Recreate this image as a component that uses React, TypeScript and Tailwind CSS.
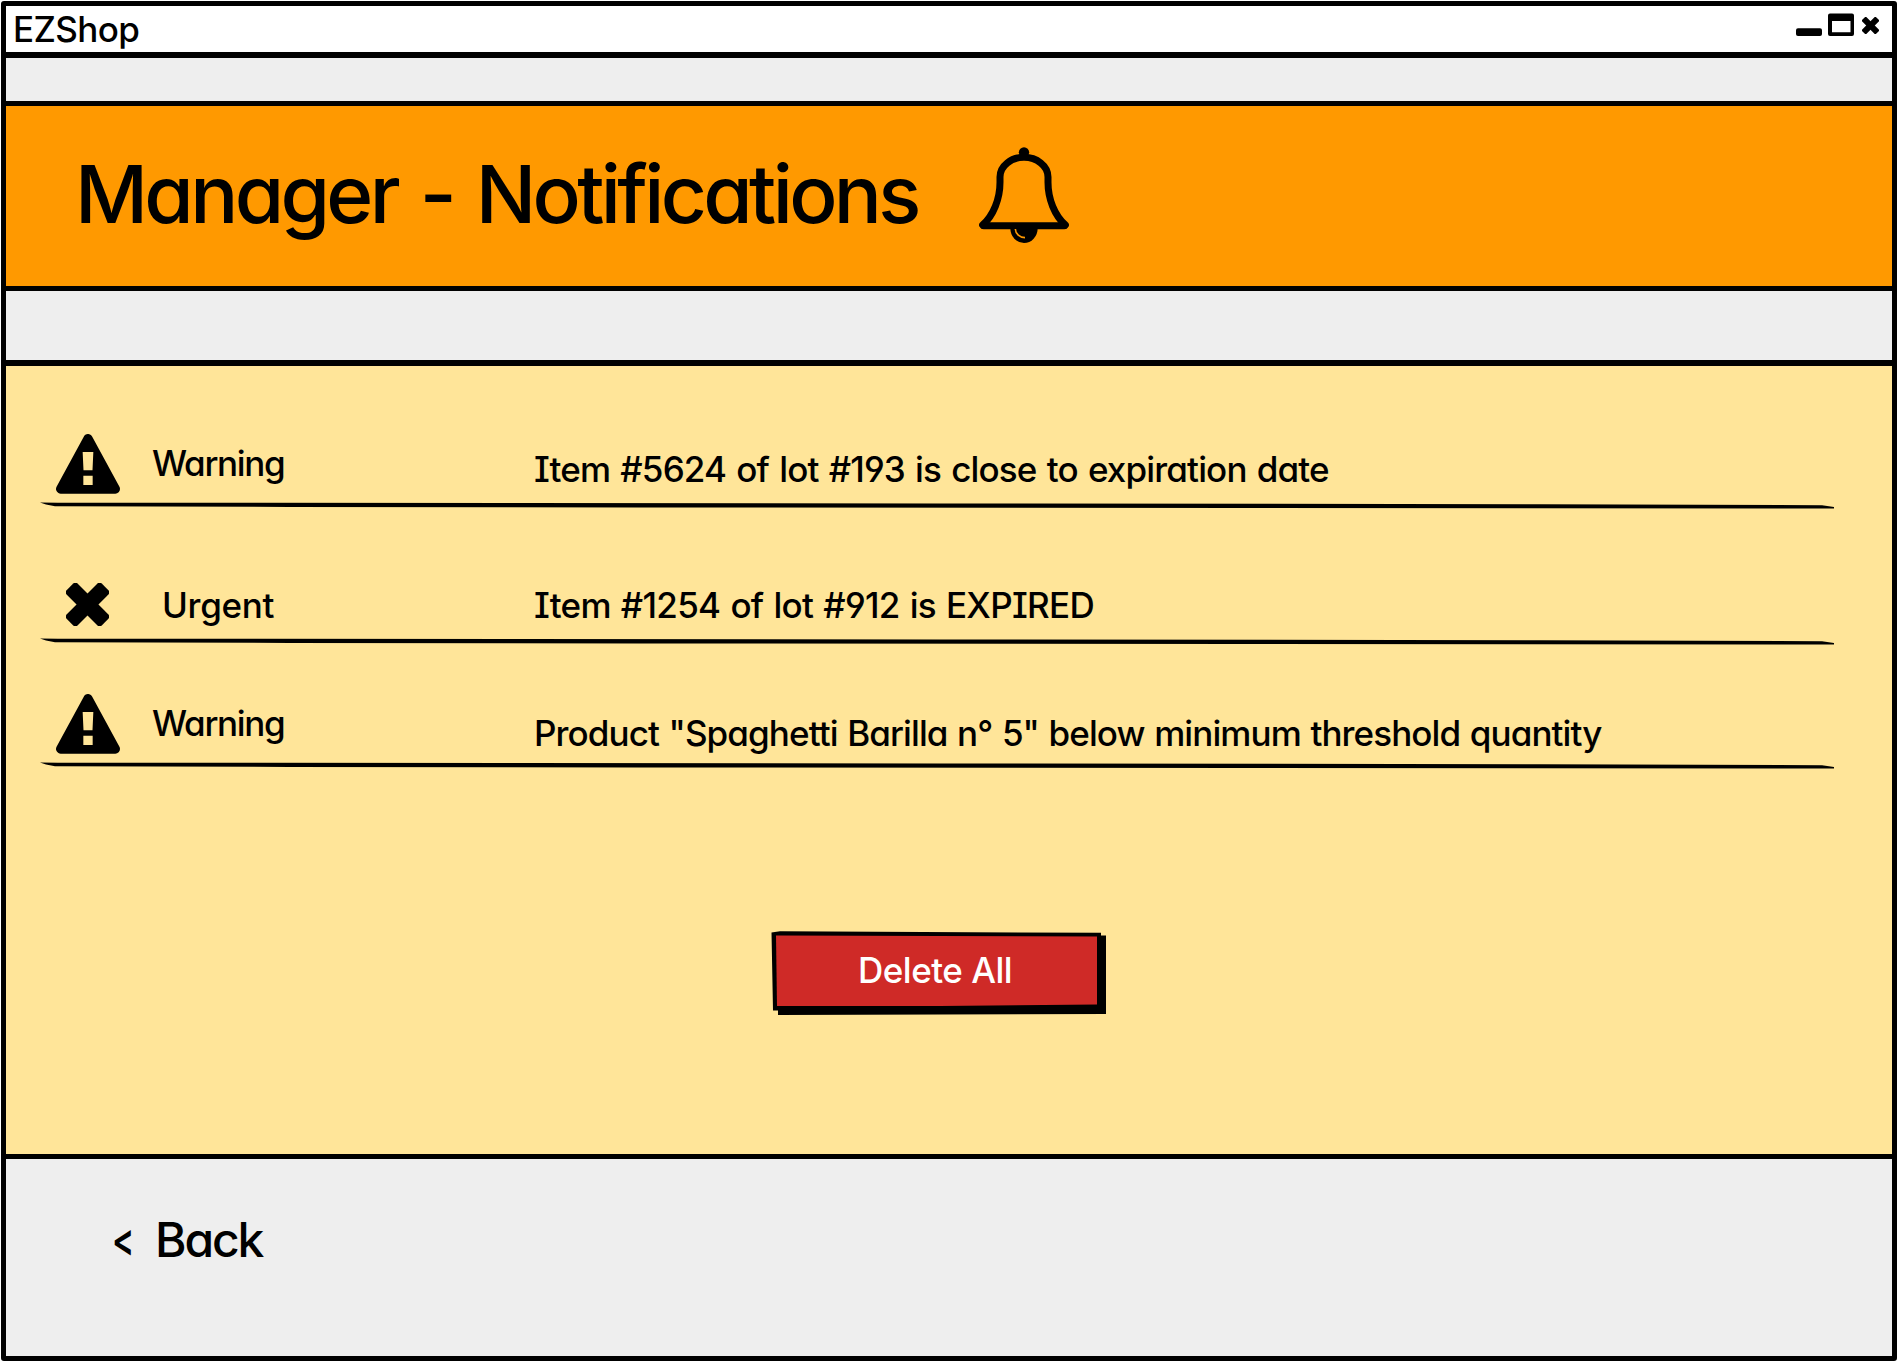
import React from "react";

function MinimizeIcon() {
  return (
    <svg width="26" height="24" viewBox="0 0 26 24">
      <rect x="0" y="15.3" width="26" height="7.7" rx="2" />
    </svg>
  );
}

function MaximizeIcon() {
  return (
    <svg width="26" height="24" viewBox="0 0 26 24">
      <path
        fillRule="evenodd"
        d="M2 .5H24Q26 .5 26 2.5V21Q26 23 24 23H2Q0 23 0 21V2.5Q0 .5 2 .5ZM4 8V19.3H22.5V8Z"
      />
    </svg>
  );
}

function CrossIcon({ size }: { size: number }) {
  return (
    <svg width={size} height={size} viewBox="0 0 128 128">
      <g transform="translate(64 64)">
        <rect x="-74" y="-23" width="148" height="46" rx="9" transform="rotate(45)" />
        <rect x="-74" y="-23" width="148" height="46" rx="9" transform="rotate(-45)" />
      </g>
    </svg>
  );
}

function WarningIcon() {
  return (
    <svg width="64" height="60" viewBox="108 252 192 180">
      <path
        d="M204 266L122 417H286Z"
        stroke="black"
        strokeWidth="28"
        strokeLinejoin="round"
      />
      <path d="M188 306H220L217.5 361H190.5ZM190 377H218V405H190Z" fill="#ffe599" />
    </svg>
  );
}

function BellIcon() {
  return (
    <svg width="90" height="97" viewBox="117 80 270 291" fill="none" stroke="black">
      <circle cx="252" cy="96" r="15.5" fill="black" stroke="none" />
      <path
        d="M128 314C160 286 180 236 180 186V170C180 136 214 111 252 111C290 111 324 136 324 170V186C324 236 344 286 376 314"
        strokeWidth="21"
        strokeLinecap="round"
      />
      <path d="M131 316.5H373" strokeWidth="21" strokeLinecap="round" />
      <path d="M211 324A41 44 0 0 0 293 324Z" fill="black" stroke="none" />
      <path d="M226 326C227 341 239 352 255 352" stroke="#ff9900" strokeWidth="5" />
    </svg>
  );
}

function SketchRule() {
  return (
    <svg className="ml-[34px] block" width="1794" height="8" viewBox="0 0 1794 8">
      <path d="M0 .4L18 .8L480 .9L900 1.4L1500 2.2L1782 3.2L1794 5V6.6L1770 6.5L1200 6L600 5.4L250 4.9L15 4.2L6 2.6Z" />
    </svg>
  );
}

interface Notice {
  kind: "warning" | "urgent";
  label: string;
  text: string;
  row: string;
  icon: string;
  labelBox: string;
  textBox: string;
}

const notices: Notice[] = [
  {
    kind: "warning",
    label: "Warning",
    text: "Item #5624 of lot #193 is close to expiration date",
    row: "h-[136px]",
    icon: "pl-[50px] pb-[8px]",
    labelBox: "pl-[146px] pb-[26px] tracking-[-1.3px]",
    textBox: "tracking-[-0.85px] [word-spacing:1.7px] pb-[20px]",
  },
  {
    kind: "urgent",
    label: "Urgent",
    text: "Item #1254 of lot #912 is EXPIRED",
    row: "h-[128px]",
    icon: "pl-[60px] pb-[12px]",
    labelBox: "pl-[156px] pb-[20px] tracking-[-0.3px]",
    textBox: "tracking-[-0.7px] [word-spacing:1.4px] pb-[20px]",
  },
  {
    kind: "warning",
    label: "Warning",
    text: 'Product "Spaghetti Barilla n° 5" below minimum threshold quantity',
    row: "h-[116px]",
    icon: "pl-[50px] pb-[8px]",
    labelBox: "pl-[146px] pb-[26px] tracking-[-1.3px]",
    textBox: "tracking-[-0.9px] [word-spacing:1.1px] pb-[16px]",
  },
];

function NoticeRow({ notice }: { notice: Notice }) {
  return (
    <li>
      <div className={`grid ${notice.row} items-end text-[35px] leading-[26px] font-medium whitespace-nowrap`}>
        <span className={`col-start-1 row-start-1 ${notice.icon}`}>
          {notice.kind === "warning" ? <WarningIcon /> : <CrossIcon size={43} />}
        </span>
        <span className={`col-start-1 row-start-1 ${notice.labelBox}`}>{notice.label}</span>
        <span className={`col-start-1 row-start-1 pl-[528px] ${notice.textBox}`}>{notice.text}</span>
      </div>
      <SketchRule />
    </li>
  );
}

export default function App() {
  return (
    <div className="flex h-[1362px] w-[1898px] overflow-hidden bg-white px-px pt-px font-['Inter',sans-serif] text-black [font-feature-settings:'cv11','cv08','cv04'] [&_svg]:block">
      <main className="flex h-[1360px] w-full flex-col rounded-[3px] border-5 border-black bg-[#eeeeee]">
        <header className="flex h-[52px] shrink-0 items-start justify-between border-b-6 border-black bg-white pl-[7px]">
          <h1 className="pt-[10px] text-[35px] leading-[26px] font-medium tracking-[-0.6px]">EZShop</h1>
          <div className="flex items-start gap-[6px] pt-[7px] pr-[13px]">
            <MinimizeIcon />
            <MaximizeIcon />
            <span className="pt-[4px] pl-[2px]">
              <CrossIcon size={17} />
            </span>
          </div>
        </header>

        <section className="mt-[43px] flex h-[190px] shrink-0 items-start border-y-5 border-black bg-[#ff9900] pl-[69px]">
          <h2 className="mt-[59px] w-[904px] text-[80px] leading-[58px] font-medium tracking-[-3.65px] whitespace-nowrap [word-spacing:5px]">
            Manager - Notifications
          </h2>
          <div className="pt-[41px]">
            <BellIcon />
          </div>
        </section>

        <section className="mt-[69px] flex h-[799px] shrink-0 flex-col border-t-6 border-b-5 border-black bg-[#ffe599]">
          <ul>
            {notices.map((notice) => (
              <NoticeRow key={notice.text} notice={notice} />
            ))}
          </ul>
          <button className="relative mt-[160px] ml-[765px] flex h-[86px] w-[336px] items-center text-white">
            <svg className="absolute inset-0" width="336" height="86" viewBox="0 0 336 86">
              <path
                fill="black"
                d="M.5 2.5L9 1.2L330 2.8V5.5H335V84L7 85V80.5H2Z"
              />
              <path fill="#cf2a27" d="M5 5.5L326 6.5V74.5L169 76L6 76Z" />
            </svg>
            <span className="relative mb-[6px] ml-[87px] text-[35px] leading-[26px] font-medium tracking-[-0.5px]">
              Delete All
            </span>
          </button>
        </section>

        <footer className="flex items-center pt-[63px] pl-[106px] font-medium">
          <button className="flex items-center">
            <span className="w-[43px] text-left text-[33px] leading-[35px] font-semibold">
              <span className="inline-block scale-y-140">&lt;</span>
            </span>
            <span className="text-[48px] leading-[35px] tracking-[-2.1px]">Back</span>
          </button>
        </footer>
      </main>
    </div>
  );
}
